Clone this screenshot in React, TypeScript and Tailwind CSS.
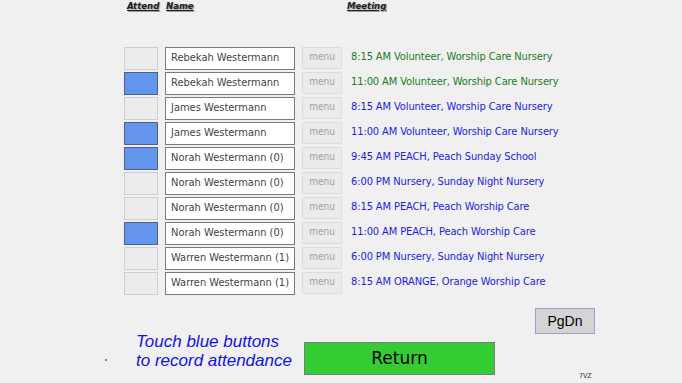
const rows = [
  { on: false, name: "Rebekah Westermann", meeting: "8:15 AM Volunteer, Worship Care Nursery", green: true },
  { on: true, name: "Rebekah Westermann", meeting: "11:00 AM Volunteer, Worship Care Nursery", green: true },
  { on: false, name: "James Westermann", meeting: "8:15 AM Volunteer, Worship Care Nursery", green: false },
  { on: true, name: "James Westermann", meeting: "11:00 AM Volunteer, Worship Care Nursery", green: false },
  { on: true, name: "Norah Westermann (0)", meeting: "9:45 AM PEACH, Peach Sunday School", green: false },
  { on: false, name: "Norah Westermann (0)", meeting: "6:00 PM Nursery, Sunday Night Nursery", green: false },
  { on: false, name: "Norah Westermann (0)", meeting: "8:15 AM PEACH, Peach Worship Care", green: false },
  { on: true, name: "Norah Westermann (0)", meeting: "11:00 AM PEACH, Peach Worship Care", green: false },
  { on: false, name: "Warren Westermann (1)", meeting: "6:00 PM Nursery, Sunday Night Nursery", green: false },
  { on: false, name: "Warren Westermann (1)", meeting: "8:15 AM ORANGE, Orange Worship Care", green: false },
];

export default function App() {
  return (
    <main className="w-[682px] h-[383px] overflow-hidden bg-[#f0f0f0] font-['DejaVu_Sans_Condensed','Noto_Sans',sans-serif]">
      {/* column headings */}
      <div className="flex pl-[127px] h-[14px] text-[9.5px] leading-[12px] font-bold italic underline text-[#222] [text-shadow:1px_1px_1px_#9a9a9a]">
        <span className="w-[39px]">Attend</span>
        <span className="w-[181px]">Name</span>
        <span>Meeting</span>
      </div>

      <div className="flex flex-col gap-[2px] pl-[124px] pt-[33px]">
        {rows.map((r, i) => (
          <div key={i} className="flex items-start h-[23px]">
            <div
              className={
                r.on
                  ? "w-[34px] h-[23px] bg-[#6495ed] border border-[#4f5f8f]"
                  : "w-[34px] h-[23px] bg-[#ececec] border border-[#cfcfcf]"
              }
            />
            <div className="ml-[7px] w-[130px] h-[23px] bg-white border border-[#7a7a7a] flex items-center pl-[5px] text-[11px] text-[#444] whitespace-nowrap overflow-hidden">
              {r.name}
            </div>
            <div className="ml-[7px] w-[40px] h-[22px] bg-[#ebebeb] border border-[#dcdcdc] flex justify-center text-[10px] text-[#a0a0a0] leading-[18px]">
              menu
            </div>
            <div
              className={
                "ml-[9px] h-[20px] flex items-center text-[11px] whitespace-nowrap tracking-[-0.1px] " +
                (r.green ? "text-[#1d7a1d]" : "text-[#1c1ce0]")
              }
            >
              {r.meeting}
            </div>
          </div>
        ))}
      </div>

      <div className="flex justify-end pr-[87px] pt-[13px]">
        <button className="w-[60px] h-[26px] bg-[#d4d4d4] border border-[#a39fcc] text-[14px] text-black font-['Liberation_Sans',Arial,sans-serif]">
          PgDn
        </button>
      </div>

      <div className="flex items-start pt-[8px]">
        <div className="w-[136px] pl-[105px] pt-[17px]">
          <div className="w-[2px] h-[2px] bg-[#888]" />
        </div>
        <div className="w-[168px] text-[17px] leading-[19px] italic text-[#1010e8] font-['Liberation_Sans',Arial,sans-serif] -mt-[10px]">
          <div>Touch blue buttons</div>
          <div>to record attendance</div>
        </div>
        <button className="w-[191px] h-[33px] bg-[#33cc33] border border-[#7a7a7a] text-[17px] text-black font-['DejaVu_Sans',Verdana,sans-serif]">
          Return
        </button>
        <div className="ml-[84px] pt-[29px] text-[7px] text-[#333]">7VZ</div>
      </div>
    </main>
  );
}
